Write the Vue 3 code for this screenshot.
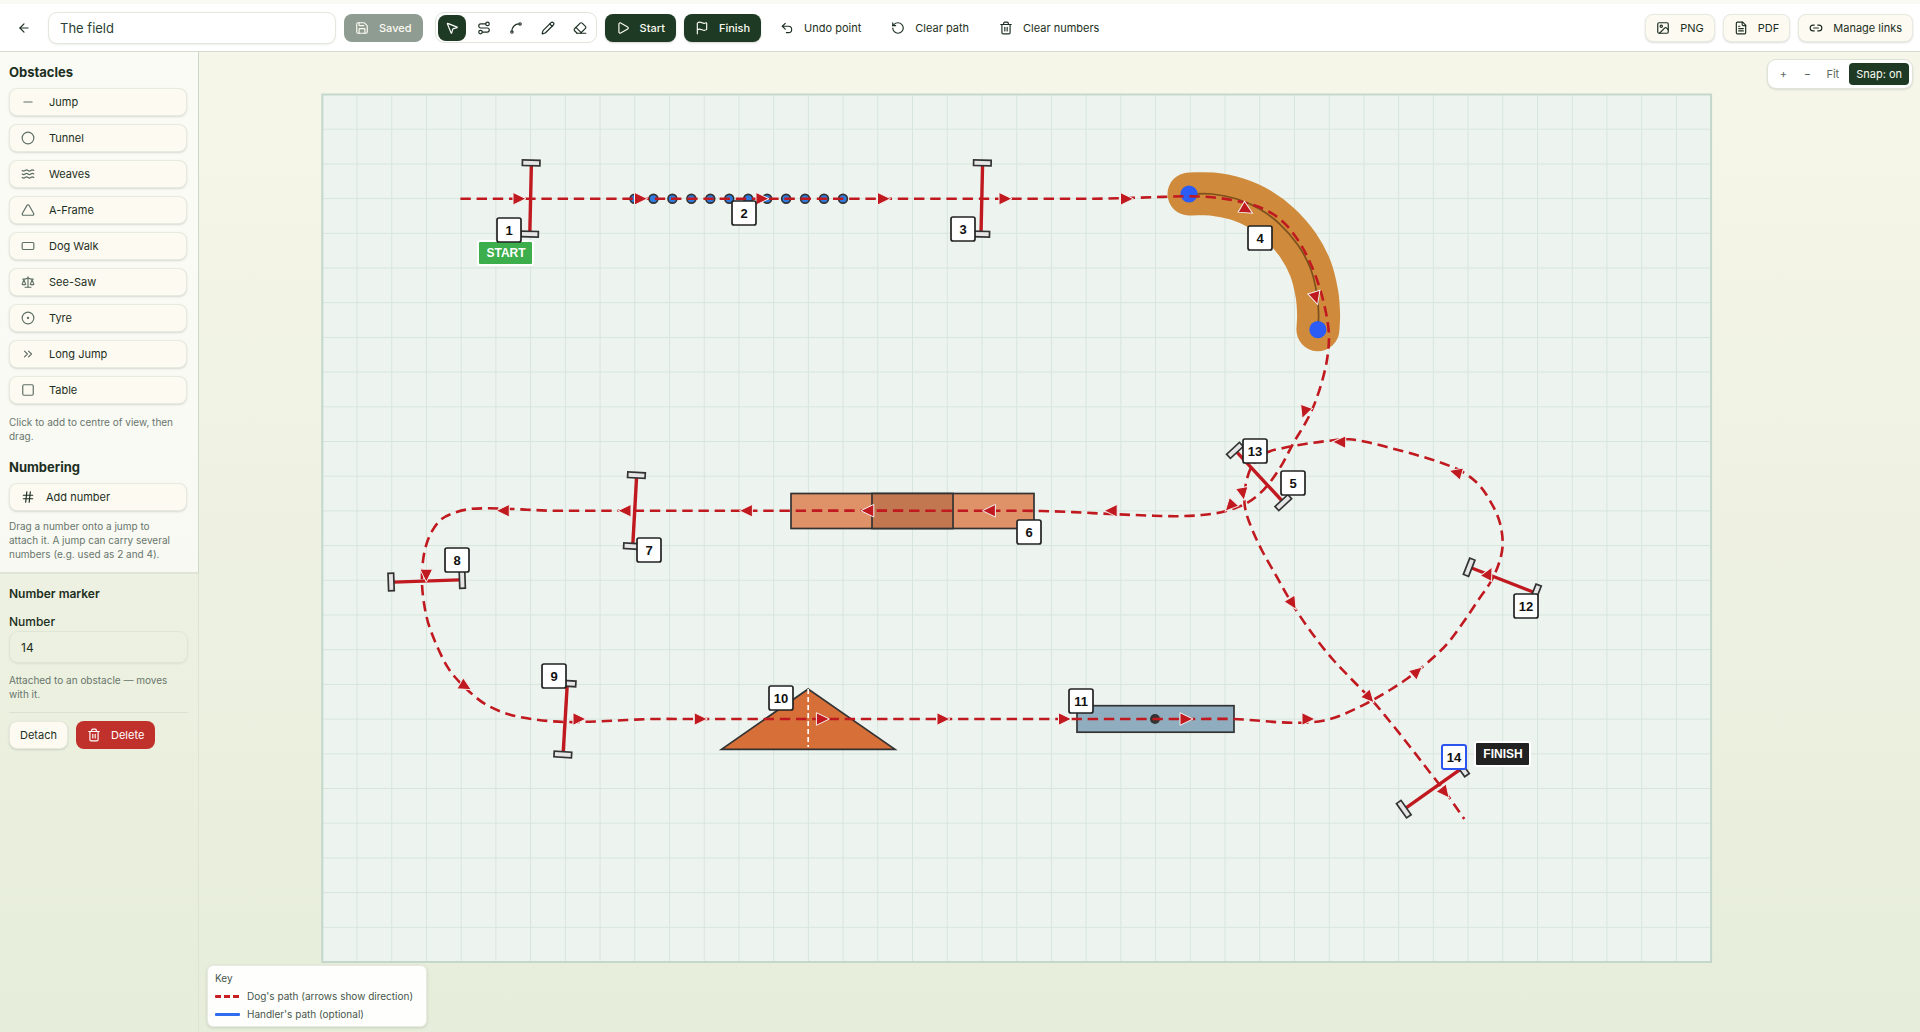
<script setup>
import { ref } from 'vue'

const icons = {
  back: '<path d="m12 19-7-7 7-7"/><path d="M19 12H5"/>',
  save: '<path d="M15.2 3a2 2 0 0 1 1.4.6l3.8 3.8a2 2 0 0 1 .6 1.4V19a2 2 0 0 1-2 2H5a2 2 0 0 1-2-2V5a2 2 0 0 1 2-2z"/><path d="M17 21v-7a1 1 0 0 0-1-1H8a1 1 0 0 0-1 1v7"/><path d="M7 3v4a1 1 0 0 0 1 1h7"/>',
  pointer: '<path d="M4.037 4.688a.495.495 0 0 1 .651-.651l16 6.5a.5.5 0 0 1-.063.947l-6.124 1.58a2 2 0 0 0-1.438 1.435l-1.579 6.126a.5.5 0 0 1-.947.063z"/>',
  route: '<circle cx="6" cy="19" r="3"/><path d="M9 19h8.500a3.500 3.500 0 0 0 0-7h-11a3.500 3.500 0 0 1 0-7H15"/><circle cx="18" cy="5" r="3"/>',
  spline: '<circle cx="19" cy="5" r="2"/><circle cx="5" cy="19" r="2"/><path d="M5 17A12 12 0 0 1 17 5"/>',
  pencil: '<path d="M21.174 6.812a1 1 0 0 0-3.986-3.987L3.842 16.174a2 2 0 0 0-.5.83l-1.321 4.352a.5.5 0 0 0 .623.622l4.353-1.32a2 2 0 0 0 .83-.497z"/><path d="m15 5 4 4"/>',
  eraser: '<path d="m7 21-4.300-4.300c-1-1-1-2.500 0-3.400l9.600-9.600c1-1 2.500-1 3.400 0l5.600 5.600c1 1 1 2.500 0 3.400L13 21"/><path d="M22 21H7"/><path d="m5 11 9 9"/>',
  play: '<path d="M5 5a2 2 0 0 1 3.008-1.728l11.997 6.998a2 2 0 0 1 .003 3.458l-12 7A2 2 0 0 1 5 19z"/>',
  flag: '<path d="M4 22V4a1 1 0 0 1 .4-.8A6 6 0 0 1 8 2c3 0 5 2 7.333 2q2 0 3.067-.8A1 1 0 0 1 20 4v10a1 1 0 0 1-.4.8A6 6 0 0 1 16 16c-3 0-5-2-8-2a6 6 0 0 0-4 1.528"/>',
  undo: '<path d="M9 14 4 9l5-5"/><path d="M4 9h10.500a5.500 5.500 0 0 1 0 11H11"/>',
  rotate: '<path d="M3 12a9 9 0 1 0 9-9 9.750 9.750 0 0 0-6.740 2.740L3 8"/><path d="M3 3v5h5"/>',
  trash: '<path d="M3 6h18"/><path d="M19 6v14a2 2 0 0 1-2 2H7a2 2 0 0 1-2-2V6"/><path d="M8 6V4a2 2 0 0 1 2-2h4a2 2 0 0 1 2 2v2"/><path d="M10 11v6"/><path d="M14 11v6"/>',
  image: '<rect width="18" height="18" x="3" y="3" rx="2"/><circle cx="9" cy="9" r="2"/><path d="m21 15-3.086-3.086a2 2 0 0 0-2.828 0L6 21"/>',
  file: '<path d="M15 2H6a2 2 0 0 0-2 2v16a2 2 0 0 0 2 2h12a2 2 0 0 0 2-2V7Z"/><path d="M14 2v4a2 2 0 0 0 2 2h4"/><path d="M10 9H8"/><path d="M16 13H8"/><path d="M16 17H8"/>',
  link: '<path d="M9 17H7A5 5 0 0 1 7 7h2"/><path d="M15 7h2a5 5 0 1 1 0 10h-2"/><path d="M8 12h8"/>',
  minus: '<path d="M5 12h14"/>',
  circle: '<circle cx="12" cy="12" r="10"/>',
  waves: '<path d="M2 6c.6.5 1.200 1 2.500 1C7 7 7 5 9.500 5c2.600 0 2.400 2 5 2 2.500 0 2.500-2 5-2 1.300 0 1.900.5 2.500 1"/><path d="M2 12c.6.5 1.200 1 2.500 1 2.500 0 2.500-2 5-2 2.600 0 2.400 2 5 2 2.500 0 2.500-2 5-2 1.300 0 1.900.5 2.500 1"/><path d="M2 18c.6.5 1.200 1 2.500 1 2.500 0 2.500-2 5-2 2.600 0 2.400 2 5 2 2.500 0 2.500-2 5-2 1.300 0 1.900.5 2.500 1"/>',
  triangle: '<path d="M13.730 4a2 2 0 0 0-3.460 0l-8 14A2 2 0 0 0 4 21h16a2 2 0 0 0 1.730-3Z"/>',
  rectangle: '<rect width="20" height="12" x="2" y="6" rx="2"/>',
  scale: '<path d="m16 16 3-8 3 8c-.87.65-1.920 1-3 1s-2.130-.35-3-1Z"/><path d="m2 16 3-8 3 8c-.87.65-1.920 1-3 1s-2.130-.35-3-1Z"/><path d="M7 21h10"/><path d="M12 3v18"/><path d="M3 7h2c2 0 5-1 7-2 2 1 5 2 7 2h2"/>',
  dot: '<circle cx="12" cy="12" r="10"/><circle cx="12" cy="12" r="1"/>',
  chevrons: '<path d="m6 17 5-5-5-5"/><path d="m13 17 5-5-5-5"/>',
  square: '<rect width="18" height="18" x="3" y="3" rx="2"/>',
  hash: '<path d="M4 9h16"/><path d="M4 15h16"/><path d="M10 3 8 21"/><path d="M16 3l-2 18"/>',
}

const courseName = ref('The field')
const markerNumber = ref('14')
const activeTool = ref('Select')

const tools = [
  { name: 'Select', icon: 'pointer' },
  { name: 'Dog path', icon: 'route' },
  { name: 'Curve', icon: 'spline' },
  { name: 'Draw', icon: 'pencil' },
  { name: 'Erase', icon: 'eraser' },
]

const obstacles = [
  ['Jump', 'minus'],
  ['Tunnel', 'circle'],
  ['Weaves', 'waves'],
  ['A-Frame', 'triangle'],
  ['Dog Walk', 'rectangle'],
  ['See-Saw', 'scale'],
  ['Tyre', 'dot'],
  ['Long Jump', 'chevrons'],
  ['Table', 'square'],
]

// Field: 40 by 25 squares, in canvas coordinates
const field = { x: 322.3, y: 94.5, w: 1388.8, h: 867.5, cols: 40, rows: 25 }
const columns = Array.from({ length: field.cols - 1 }, (_, i) => field.x + ((i + 1) * field.w) / field.cols)
const rows = Array.from({ length: field.rows - 1 }, (_, i) => field.y + ((i + 1) * field.h) / field.rows)

// Smooth curve through a list of points
function smooth(points) {
  let d = `M${points[0][0]} ${points[0][1]}`
  for (let i = 0; i < points.length - 1; i++) {
    const a = points[i - 1] || points[i]
    const b = points[i]
    const c = points[i + 1]
    const e = points[i + 2] || c
    // a long straight leg must not drag its neighbours
    const len = Math.hypot(c[0] - b[0], c[1] - b[1])
    const t1 = Math.hypot(c[0] - a[0], c[1] - a[1]) || 1
    const t2 = Math.hypot(e[0] - b[0], e[1] - b[1]) || 1
    const k = len / 3
    d += ` C${b[0] + ((c[0] - a[0]) / t1) * k} ${b[1] + ((c[1] - a[1]) / t1) * k}`
    d += ` ${c[0] - ((e[0] - b[0]) / t2) * k} ${c[1] - ((e[1] - b[1]) / t2) * k} ${c[0]} ${c[1]}`
  }
  return d
}

const dogPath = smooth([
  [460.4, 198.7], [800, 198.7], [1090, 198.7], [1128, 198], [1167, 196.7], [1189, 196.3], [1212, 197.3], [1237, 201], [1262, 208.3],
  [1281.8, 220.7], [1297.9, 240], [1310.4, 263.3], [1319.3, 286.7], [1325.4, 310], [1328.6, 330], [1328.6, 346.7],
  [1325, 370], [1316, 400], [1306.7, 420.7], [1293.3, 443.3], [1282.7, 463.3], [1271.7, 480], [1260, 493.3],
  [1245, 504], [1223.3, 511.7], [1201.7, 515], [1178.6, 516.2], [1153.6, 515.7], [1110.7, 514], [1071, 512],
  [1035.7, 510.9], [1000, 510.7], [580, 510.7], [551.7, 510.7], [526.7, 509.7], [506.7, 508.7], [486.7, 508.3], [470, 509],
  [456.7, 512], [441.7, 519], [431.7, 531.7], [425.7, 546.7], [422.7, 563.3], [422, 583.3], [424, 603.3],
  [428.3, 623.3], [437.3, 646.7], [447.3, 666.7], [456.7, 679], [470, 692.3], [486.7, 705], [510, 714.7],
  [536.7, 719.7], [565, 722], [600, 721.3], [626.7, 720], [653.3, 719], [690, 719], [1190, 719], [1233, 719], [1256.7, 720.5],
  [1280, 722.3], [1303, 722.7], [1323, 720.7], [1340, 715.7], [1366.7, 703.3], [1390, 690], [1406.7, 679],
  [1426.7, 663.3], [1446.7, 644.3], [1463.3, 622.3], [1478.3, 600], [1491.7, 580], [1500, 560], [1502.7, 543.3],
  [1500, 523.3], [1493.3, 506.7], [1480, 486], [1463.3, 472.3], [1443.3, 463.5], [1420, 456], [1393.3, 448.7],
  [1366.7, 442], [1349, 439.3], [1330, 440.7], [1305, 444], [1283.3, 448], [1268, 452], [1256.7, 460],
  [1250.7, 468.3], [1246.7, 480], [1244.3, 495], [1245.5, 510], [1251.7, 528.3], [1261.7, 550], [1276.7, 576.7],
  [1293.3, 605.7], [1313.3, 635], [1333.3, 660], [1353.3, 681], [1373.3, 701.7], [1390, 721.7], [1410, 746.7],
  [1426.7, 768.3], [1446.7, 794], [1464.3, 819],
])

const tunnel = smooth([
  [1189, 194], [1212, 194], [1237, 199], [1259.6, 209], [1280, 224.3], [1297.9, 245],
  [1310.4, 268.3], [1316.8, 293.3], [1318.6, 314], [1317.9, 329.7],
])

// x, y, heading
const arrows = [
  [519, 198.7, 0], [640.5, 198.7, 0], [762, 198.7, 0], [883.5, 198.7, 0], [1005, 198.7, 0], [1126.5, 198.9, 0],
  [1246.5, 209.7, 30], [1315.6, 297.8, 73], [1304.5, 412, 110], [1230, 506, 133],
  [1111.2, 510.7, 180], [989.4, 510.7, 180], [867.8, 510.7, 180], [746.4, 510.7, 180], [625, 510.7, 180],
  [503.3, 510.7, 180], [426.3, 575.2, 90], [465.3, 686.3, 30], [579, 719, 0], [700.3, 719, 0], [822.4, 719, 0],
  [943, 719, 0], [1064.5, 719, 0], [1186, 719, 0], [1308, 719, 0], [1417, 671.5, -41], [1488.8, 573.3, -62],
  [1456, 472.5, 196], [1339.7, 442, 181], [1242.8, 493.500, 80], [1292.5, 603.5, 59], [1369.2, 697.5, 48], [1444.8, 792.5, 52],
]

const jumps = [
  [530.6, 198.5, 1.3], [981.8, 198.5, 1.3], [634.7, 510.7, 3.2], [426.7, 581, 88], [565.2, 719, 3.4],
  [1259.3, 476.3, -42.8], [1502.4, 580, -68.6], [1433, 788.8, 54.7],
]

const poles = Array.from({ length: 12 }, (_, i) => 634.5 + i * 18.95)

const markers = [
  [1, 509, 230], [2, 744, 213], [3, 963, 229], [4, 1260, 238], [5, 1293, 483], [6, 1029, 532], [7, 649, 550],
  [8, 457, 560], [9, 554, 676], [10, 781, 698], [11, 1081, 701], [12, 1526, 606], [13, 1255, 451], [14, 1454, 757],
]
</script>

<template>
  <div class="app">
    <header class="topbar">
      <button class="btn ghost back" aria-label="Back"><svg class="icon" viewBox="0 0 24 24" v-html="icons.back" /></button>
      <input v-model="courseName" class="name" aria-label="Course name" />
      <button class="btn primary saved" disabled><svg class="icon" viewBox="0 0 24 24" v-html="icons.save" />Saved</button>
      <div class="tools" role="group" aria-label="Tools">
        <button
          v-for="t in tools"
          :key="t.name"
          class="tool"
          :class="{ active: activeTool === t.name }"
          :aria-label="t.name"
          @click="activeTool = t.name"
        >
          <svg class="icon" viewBox="0 0 24 24" v-html="icons[t.icon]" />
        </button>
      </div>
      <button class="btn primary"><svg class="icon" viewBox="0 0 24 24" v-html="icons.play" />Start</button>
      <button class="btn primary"><svg class="icon" viewBox="0 0 24 24" v-html="icons.flag" />Finish</button>
      <button class="btn ghost"><svg class="icon" viewBox="0 0 24 24" v-html="icons.undo" />Undo point</button>
      <button class="btn ghost"><svg class="icon" viewBox="0 0 24 24" v-html="icons.rotate" />Clear path</button>
      <button class="btn ghost"><svg class="icon" viewBox="0 0 24 24" v-html="icons.trash" />Clear numbers</button>
      <div class="exports">
        <button class="btn card"><svg class="icon" viewBox="0 0 24 24" v-html="icons.image" />PNG</button>
        <button class="btn card"><svg class="icon" viewBox="0 0 24 24" v-html="icons.file" />PDF</button>
        <button class="btn card"><svg class="icon" viewBox="0 0 24 24" v-html="icons.link" />Manage links</button>
      </div>
    </header>

    <div class="body">
      <aside class="sidebar">
        <section class="palette">
          <h2>Obstacles</h2>
          <ul>
            <li v-for="[name, icon] in obstacles" :key="name">
              <button class="btn card wide"><svg class="icon muted" viewBox="0 0 24 24" v-html="icons[icon]" />{{ name }}</button>
            </li>
          </ul>
          <p class="after-list">Click to add to centre of view, then drag.</p>
          <h2 class="second">Numbering</h2>
          <button class="btn card wide number"><svg class="icon" viewBox="0 0 24 24" v-html="icons.hash" />Add number</button>
          <p>Drag a number onto a jump to attach it. A jump can carry several numbers (e.g. used as 2 and 4).</p>
        </section>
        <section class="inspector">
          <h3>Number marker</h3>
          <label for="marker">Number</label>
          <input id="marker" v-model="markerNumber" />
          <p class="attached">Attached to an obstacle — moves with it.</p>
          <div class="actions">
            <button class="btn card">Detach</button>
            <button class="btn danger"><svg class="icon" viewBox="0 0 24 24" v-html="icons.trash" />Delete</button>
          </div>
        </section>
      </aside>

      <main class="stage">
        <svg class="canvas" viewBox="199 52 1721 980" preserveAspectRatio="xMinYMin meet">
          <rect class="field" :x="field.x" :y="field.y" :width="field.w" :height="field.h" />
          <g class="grid">
            <line v-for="x in columns" :key="'c' + x" :x1="x" :x2="x" :y1="field.y" :y2="field.y + field.h" />
            <line v-for="y in rows" :key="'r' + y" :y1="y" :y2="y" :x1="field.x" :x2="field.x + field.w" />
          </g>
          <rect class="field-edge" :x="field.x" :y="field.y" :width="field.w" :height="field.h" />

          <circle v-for="x in poles" :key="x" class="pole" :cx="x" cy="198.700" r="4.400" />
          <path class="tunnel" :d="tunnel" />
          <path class="tunnel-line" :d="tunnel" />
          <circle class="handle" cx="1189" cy="194" r="8.600" />
          <circle class="handle" cx="1317.900" cy="329.700" r="8.600" />

          <g class="outlined">
            <rect x="791" y="493.500" width="243" height="35" fill="#df9168" />
            <rect x="872" y="493.500" width="81" height="35" fill="#c27750" />
            <path d="M808.200 689 721.500 749.300H895Z" fill="#d66f38" />
            <rect x="1077" y="705.700" width="157" height="26.500" fill="#8fadbf" />
          </g>
          <path class="ridge" d="M808.200 689V747" />
          <circle cx="1155" cy="719" r="5" fill="#333" />

          <g v-for="[x, y, r] in jumps" :key="x" :transform="`translate(${x} ${y}) rotate(${r})`">
            <line class="bar" y1="-33" y2="33" />
            <rect class="foot" x="-9" y="-38.400" width="17.500" height="5.600" />
            <rect class="foot" x="-9" y="32.800" width="17.500" height="5.600" />
          </g>

          <path class="dog-path" :d="dogPath" />
          <path
            v-for="[x, y, r] in arrows"
            :key="x"
            class="arrow"
            d="M7-0.010-6-6.300V6.300Z"
            :transform="`translate(${x} ${y}) rotate(${r})`"
          />

          <g class="flag start">
            <rect x="479" y="242" width="53" height="22" rx="1" />
            <text x="506" y="257">START</text>
          </g>
          <g class="flag finish">
            <rect x="1476" y="743" width="53" height="22" rx="1" />
            <text x="1503" y="758">FINISH</text>
          </g>
          <g v-for="[n, x, y] in markers" :key="n" class="marker" :class="{ selected: String(n) === markerNumber }">
            <rect :x="x - 12" :y="y - 12" width="24" height="24" rx="2" />
            <text :x="x" :y="y + 5">{{ n }}</text>
          </g>
        </svg>

        <div class="zoom">
          <button aria-label="Zoom in">+</button>
          <button aria-label="Zoom out">−</button>
          <button>Fit</button>
          <button class="snap">Snap: on</button>
        </div>
        <div class="key">
          <div>Key</div>
          <div class="key-row"><span class="swatch dog"></span>Dog's path (arrows show direction)</div>
          <div class="key-row"><span class="swatch handler"></span>Handler's path (optional)</div>
        </div>
      </main>
    </div>
  </div>
</template>

<style>
body {
  background: #fcfcf8;
}
</style>

<style scoped>
.app {
  box-sizing: border-box;
  display: flex;
  flex-direction: column;
  min-height: 100vh;
  background: linear-gradient(#f7f6ea, #e6edda);
  color: #1c2f22;
  font-family: Inter, "Open Sans", sans-serif;
  font-size: 12px;
}
.app * {
  box-sizing: border-box;
}
button,
input {
  font: inherit;
  color: inherit;
}
button {
  cursor: pointer;
}
.icon {
  flex: none;
  width: 14px;
  height: 14px;
  fill: none;
  stroke: currentColor;
  stroke-width: 2;
  stroke-linecap: round;
  stroke-linejoin: round;
}
.icon.muted {
  color: #5f6f64;
}

.topbar {
  display: flex;
  align-items: center;
  gap: 8px;
  height: 52px;
  padding: 0 7px 0 8px;
  background: #fff;
  border-top: 4px solid #f9faf4;
  border-bottom: 1px solid #d3dad0;
}
.btn {
  display: inline-flex;
  align-items: center;
  gap: 10px;
  height: 28px;
  padding: 0 10px;
  border: 1px solid transparent;
  border-radius: 8px;
  background: none;
  font-size: 11px;
  white-space: nowrap;
}
.back {
  width: 32px;
  justify-content: center;
  padding: 0;
}
.name {
  width: 288px;
  height: 32px;
  padding: 0 11px;
  border: 1px solid #e2e8dd;
  border-radius: 9px;
  background: #fff;
  box-shadow: 0 1px 2px #1c2f2214;
  color: #2b3f32;
  font-size: 13px;
}
.primary {
  background: #1e3a24;
  color: #fbfaf2;
  font-weight: 500;
  box-shadow: 0 1px 2px #1c2f2233;
}
.saved {
  background: #8f9c91;
  margin-right: 4px;
  box-shadow: none;
}
.tools {
  display: flex;
  align-items: center;
  gap: 4px;
  height: 31px;
  padding: 0 2px;
  border: 1px solid #dfe5da;
  border-radius: 9px;
}
.tool {
  display: grid;
  place-items: center;
  width: 28px;
  height: 26px;
  padding: 0;
  border: 0;
  border-radius: 8px;
  background: none;
}
.tool.active {
  background: #1e3a24;
  color: #fff;
}
.exports {
  display: flex;
  gap: 8px;
  margin-left: auto;
}
.card {
  background: #fdfaf2;
  border-color: #e6eadf;
  box-shadow: 0 1px 2px #1c2f2226;
}
.danger {
  background: #c0312c;
  color: #fff;
}

.body {
  display: flex;
  flex: 1;
}
.sidebar {
  flex: none;
  width: 199px;
  border-right: 1px solid #dde4d3;
}
.palette {
  margin-right: -1px;
  padding: 10px 11px 11px 9px;
  border-bottom: 2px solid #dfe5d8;
  border-right: 1px solid #ccd8c8;
  background: #ffffff99;
}
.inspector {
  padding: 10px 10px 12px 9px;
}
h2,
h3,
p,
ul {
  margin: 0;
}
h2 {
  margin-bottom: 6px;
  font-size: 13px;
  line-height: 20px;
  font-weight: 700;
}
h2.second {
  margin-top: 14px;
}
ul {
  display: flex;
  flex-direction: column;
  gap: 8px;
  padding: 0;
  list-style: none;
}
li {
  display: flex;
}
.wide {
  width: 100%;
  padding: 0 11px;
  gap: 14px;
}
.number {
  gap: 11px;
}
p {
  margin-top: 8px;
  padding-right: 10px;
  color: #68766c;
  font-size: 10px;
  line-height: 14px;
}
.after-list {
  margin-top: 11px;
}
h3 {
  font-size: 12px;
  line-height: 20px;
  font-weight: 600;
}
label {
  display: block;
  margin-top: 10px;
  line-height: 16px;
  font-weight: 500;
}
#marker {
  display: block;
  width: 100%;
  height: 32px;
  margin-top: 1px;
  padding: 0 11px;
  border: 1px solid #e0e6d6;
  border-radius: 9px;
  background: transparent;
  box-shadow: 0 1px 2px #1c2f2214;
}
.attached {
  margin-top: 10px;
}
.actions {
  display: flex;
  gap: 8px;
  margin-top: 11px;
  padding-top: 8px;
  border-top: 1px solid #dae1d0;
}

.stage {
  position: relative;
  flex: 1;
  min-width: 0;
}
.canvas {
  display: block;
  width: 100%;
}
.field {
  fill: #edf4f0;
}
.field-edge {
  fill: none;
  stroke: #c3d8cb;
  stroke-width: 2;
}
.grid line {
  stroke: #d7e5dd;
}
.pole {
  fill: #2f7be0;
  stroke: #333;
  stroke-width: 1.7;
}
.tunnel {
  fill: none;
  stroke: #cf8b3b;
  stroke-width: 43;
  stroke-linecap: round;
}
.tunnel-line {
  fill: none;
  stroke: #7c501c;
  stroke-width: 1.7;
}
.handle {
  fill: #2b5cf5;
}
.outlined > * {
  stroke: #333;
  stroke-width: 1.7;
}
.ridge {
  stroke: #fff;
  stroke-width: 1.7;
  stroke-dasharray: 5 3;
}
.bar {
  stroke: #c0191f;
  stroke-width: 3.4;
}
.foot {
  fill: #e5e5e5;
  stroke: #333;
  stroke-width: 1.7;
}
.dog-path {
  fill: none;
  stroke: #c0191f;
  stroke-width: 2.6;
  stroke-dasharray: 10.4 5.8;
}
.arrow {
  fill: #c0191f;
  stroke: #f3f0ee;
  stroke-width: 1;
}
.marker rect {
  fill: #fff;
  stroke: #222;
  stroke-width: 1.7;
}
.marker.selected rect {
  stroke: #2b55ee;
  stroke-width: 2;
}
.marker text,
.flag text {
  font-family: "Liberation Sans", Arial, sans-serif;
  font-weight: 700;
  text-anchor: middle;
}
.marker text {
  font-size: 13px;
  fill: #111;
}
.flag rect {
  stroke: #fff;
  stroke-width: 4;
  paint-order: stroke;
}
.flag text {
  font-size: 12px;
  fill: #fff;
}
.start rect {
  fill: #3cae4b;
}
.finish rect {
  fill: #222;
}

.zoom {
  position: absolute;
  top: 7px;
  right: 7px;
  display: flex;
  align-items: center;
  height: 30px;
  padding: 0 3px;
  border: 1px solid #dde3d8;
  border-radius: 9px;
  background: #fff;
  box-shadow: 0 1px 2px #1c2f221f;
}
.zoom button {
  min-width: 24px;
  height: 22px;
  padding: 0 7px;
  border: 0;
  border-radius: 4px;
  background: none;
  color: #5b6b60;
  font-size: 11px;
}
.zoom .snap {
  margin-left: 3px;
  background: #1e3a24;
  color: #fbfaf2;
}
.key {
  position: absolute;
  bottom: 5px;
  left: 8px;
  padding: 3px 13px 3px 7px;
  border: 1px solid #e6eae0;
  border-radius: 6px;
  background: #fefefc;
  box-shadow: 0 1px 3px #1c2f2226;
  color: #46564b;
  font-size: 10px;
  line-height: 18px;
}
.key-row {
  display: flex;
  align-items: center;
  gap: 7px;
}
.swatch {
  width: 25px;
  height: 3px;
  border-radius: 1px;
}
.dog {
  background: repeating-linear-gradient(90deg, #c81e24 0 6px, transparent 6px 9px);
}
.handler {
  background: #2f6df0;
}
</style>
